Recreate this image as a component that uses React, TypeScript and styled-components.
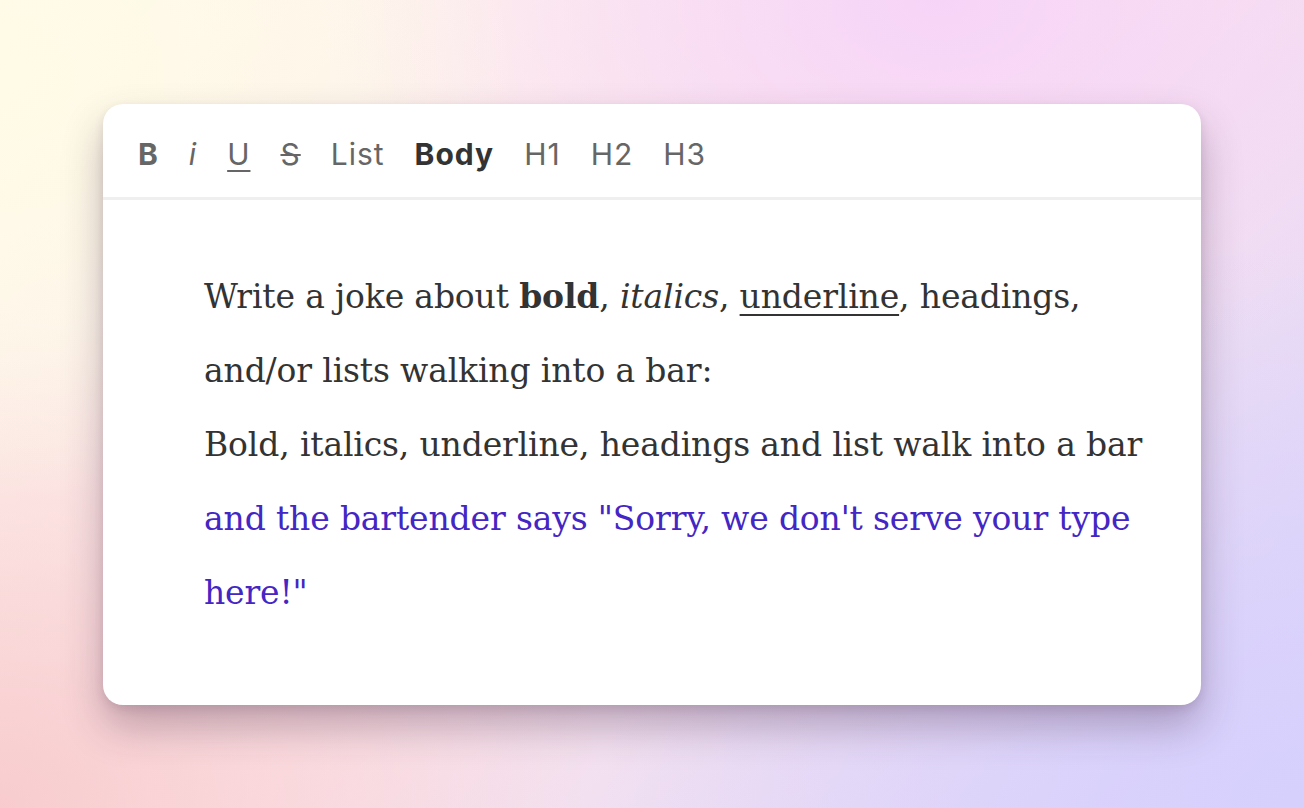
import * as React from "react";
import styled, { createGlobalStyle } from "styled-components";

const GlobalStyle = createGlobalStyle`
    html, body {
        margin: 0;
        padding: 0;
    }
    body {
        font-family: "Inter", "Liberation Sans", sans-serif;
    }
`;

const Backdrop = styled.div`
    width: 1304px;
    height: 808px;
    box-sizing: border-box;
    padding: 104px 103px 0 103px;
    background:
        radial-gradient(ellipse 520px 420px at 0% 10%, #fffbe6 0%, rgba(255, 251, 230, 0) 100%),
        radial-gradient(ellipse 600px 400px at 72% 0%, #f6d4f8 0%, rgba(246, 212, 248, 0) 100%),
        radial-gradient(ellipse 600px 500px at 0% 100%, #f8ccce 0%, rgba(248, 204, 206, 0) 100%),
        radial-gradient(ellipse 700px 560px at 100% 100%, #d6d0fd 0%, rgba(214, 208, 253, 0) 100%),
        linear-gradient(135deg, #fffbec 0%, #fce6ec 50%, #dcd3fb 100%);
    overflow: hidden;
`;

const Card = styled.div`
    width: 1098px;
    height: 601px;
    background: #ffffff;
    border-radius: 20px;
    box-shadow: 0 22px 40px rgba(70, 40, 70, 0.32), 0 4px 10px rgba(70, 40, 70, 0.12);
    display: flex;
    flex-direction: column;
    overflow: hidden;
`;

const Toolbar = styled.div`
    display: flex;
    align-items: center;
    gap: 30px;
    height: 87px;
    padding: 6px 0 0 35px;
    border-bottom: 3px solid #efefef;
    box-sizing: content-box;
`;

const Tool = styled.span<{ $variant?: "bold" | "italic" | "underline" | "strike" | "active" }>`
    font-family: "Inter", "Liberation Sans", sans-serif;
    font-size: 30px;
    letter-spacing: 1px;
    line-height: 1;
    color: ${(p) => (p.$variant === "active" ? "#333333" : "#666666")};
    font-weight: ${(p) => (p.$variant === "bold" || p.$variant === "active" ? 700 : 400)};
    font-style: ${(p) => (p.$variant === "italic" ? "italic" : "normal")};
    text-decoration: ${(p) =>
        p.$variant === "underline" ? "underline" : p.$variant === "strike" ? "line-through" : "none"};
    text-decoration-thickness: 2px;
    text-underline-offset: 5px;
`;

const Content = styled.div`
    width: 950px;
    padding: 60px 0 0 101px;
    font-family: "DejaVu Serif", "Liberation Serif", serif;
    font-size: 33px;
    line-height: 74px;
    color: #333333;
    letter-spacing: -0.15px;
`;

const Para = styled.p<{ $tone?: "ai" }>`
    margin: 0;
    color: ${(p) => (p.$tone === "ai" ? "#4326c4" : "#333333")};
`;

const Underlined = styled.u`
    text-decoration-thickness: 2px;
    text-underline-offset: 6px;
`;

export default function App() {
    return (
        <>
            <GlobalStyle />
            <Backdrop>
                <Card>
                    <Toolbar>
                        <Tool $variant="bold">B</Tool>
                        <Tool $variant="italic">i</Tool>
                        <Tool $variant="underline">U</Tool>
                        <Tool $variant="strike">S</Tool>
                        <Tool>List</Tool>
                        <Tool $variant="active">Body</Tool>
                        <Tool>H1</Tool>
                        <Tool>H2</Tool>
                        <Tool>H3</Tool>
                    </Toolbar>
                    <Content>
                        <Para>
                            Write a joke about <b>bold</b>, <i>italics</i>, <Underlined>underline</Underlined>, headings,
                            and/or lists walking into a bar:
                        </Para>
                        <Para>Bold, italics, underline, headings and list walk into a bar</Para>
                        <Para $tone="ai">and the bartender says "Sorry, we don't serve your type here!"</Para>
                    </Content>
                </Card>
            </Backdrop>
        </>
    );
}
